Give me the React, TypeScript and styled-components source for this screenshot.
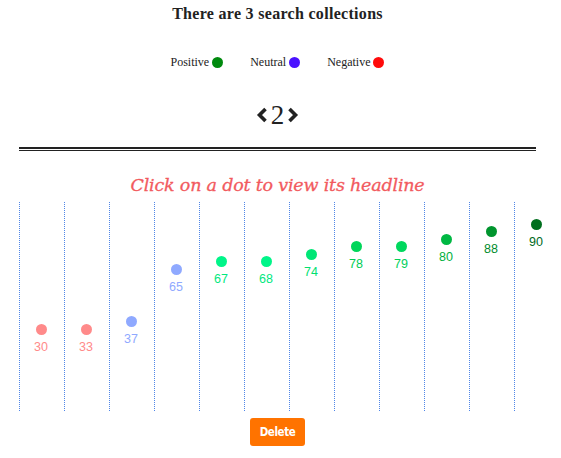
import styled, { createGlobalStyle } from "styled-components";

const GlobalStyle = createGlobalStyle`
  html, body {
    margin: 0;
    padding: 0;
    background: #fff;
  }
  body {
    font-family: "DejaVu Serif", "Liberation Serif", serif;
  }
`;

type Sentiment = {
  score: number;
  offset: number;
  dot: string;
  text: string;
};

// offset = distance from column top to dot top, read from the chart
const scores: Sentiment[] = [
  { score: 30, offset: 122, dot: "#ff8a8a", text: "#ff8a8a" },
  { score: 33, offset: 122, dot: "#ff8a8a", text: "#ff8a8a" },
  { score: 37, offset: 114, dot: "#8fa9ff", text: "#8fa9ff" },
  { score: 65, offset: 62, dot: "#8fa9ff", text: "#8fa9ff" },
  { score: 67, offset: 54, dot: "#00f589", text: "#00e880" },
  { score: 68, offset: 54, dot: "#00f589", text: "#00e880" },
  { score: 74, offset: 47, dot: "#00e676", text: "#00e070" },
  { score: 78, offset: 39, dot: "#00d65a", text: "#00cc55" },
  { score: 79, offset: 39, dot: "#00d85e", text: "#00d05a" },
  { score: 80, offset: 32, dot: "#00b843", text: "#00b040" },
  { score: 88, offset: 24, dot: "#00952e", text: "#008c2c" },
  { score: 90, offset: 17, dot: "#006f1e", text: "#006a1c" },
];

const Page = styled.div`
  width: 555px;
  height: 458px;
  display: flex;
  flex-direction: column;
  align-items: center;
  overflow: hidden;
`;

const Title = styled.h1`
  margin: 5px 0 0;
  font-family: "Liberation Serif", serif;
  font-size: 16px;
  font-weight: bold;
  color: #222;
  letter-spacing: 0.3px;
`;

const Legend = styled.div`
  margin-top: 32px;
  display: flex;
  gap: 27px;
  font-family: "Liberation Serif", serif;
  font-size: 12px;
  color: #222;
`;

const LegendItem = styled.span`
  display: flex;
  align-items: center;
  gap: 3px;
`;

const LegendDot = styled.span<{ $color: string }>`
  width: 11px;
  height: 11px;
  border-radius: 50%;
  background: ${(p) => p.$color};
`;

const Pager = styled.div`
  margin-top: 30px;
  display: flex;
  align-items: center;
  gap: 3px;
  font-family: "Liberation Serif", serif;
  font-size: 27px;
  color: #222;
  line-height: 30px;
`;

const Chevron = styled.svg`
  width: 12px;
  height: 16px;
  cursor: pointer;
`;

const Rule = styled.div`
  margin-top: 17px;
  align-self: flex-start;
  margin-left: 19px;
  width: 517px;
  height: 1px;
  border-top: 2px solid #222;
  border-bottom: 1px solid #222;
`;

const Hint = styled.div`
  margin-top: 24px;
  font-family: "DejaVu Serif", serif;
  font-style: italic;
  font-size: 17.5px;
  color: #f25a5e;
  letter-spacing: -0.2px;
  -webkit-text-stroke: 0.3px #f25a5e;
`;

const Chart = styled.div`
  margin-top: 7px;
  align-self: flex-start;
  margin-left: 19px;
  display: grid;
  grid-template-columns: repeat(12, 45px);
  height: 209px;
`;

const Column = styled.div`
  border-left: 1px dotted #4f86e8;
  padding-right: 2px;
  display: flex;
  flex-direction: column;
  align-items: center;
`;

const Dot = styled.span<{ $color: string; $offset: number }>`
  margin-top: ${(p) => p.$offset}px;
  width: 11px;
  height: 11px;
  border-radius: 50%;
  background: ${(p) => p.$color};
  cursor: pointer;
`;

const Score = styled.span<{ $color: string }>`
  margin-top: 5px;
  font-family: "Liberation Sans", Arial, sans-serif;
  font-size: 12.5px;
  color: ${(p) => p.$color};
`;

const DeleteButton = styled.button`
  margin-top: 7px;
  width: 55px;
  height: 28px;
  border: none;
  border-radius: 3px;
  background: #ff7300;
  color: #fff;
  font-family: "DejaVu Sans", sans-serif;
  font-stretch: condensed;
  font-weight: bold;
  font-size: 11.5px;
  letter-spacing: -0.4px;
  cursor: pointer;
`;

export default function App() {
  return (
    <>
      <GlobalStyle />
      <Page>
        <Title>There are 3 search collections</Title>
        <Legend>
          <LegendItem>
            Positive <LegendDot $color="#008a0e" />
          </LegendItem>
          <LegendItem>
            Neutral <LegendDot $color="#4a12ff" />
          </LegendItem>
          <LegendItem>
            Negative <LegendDot $color="#ff0b0b" />
          </LegendItem>
        </Legend>
        <Pager>
          <Chevron viewBox="0 0 12 16">
            <path d="M9.5 2 L3.5 8 L9.5 14" fill="none" stroke="#222" strokeWidth="3.6" />
          </Chevron>
          2
          <Chevron viewBox="0 0 12 16">
            <path d="M2.5 2 L8.5 8 L2.5 14" fill="none" stroke="#222" strokeWidth="3.6" />
          </Chevron>
        </Pager>
        <Rule />
        <Hint>Click on a dot to view its headline</Hint>
        <Chart>
          {scores.map((s, i) => (
            <Column key={i}>
              <Dot $color={s.dot} $offset={s.offset} />
              <Score $color={s.text}>{s.score}</Score>
            </Column>
          ))}
        </Chart>
        <DeleteButton>Delete</DeleteButton>
      </Page>
    </>
  );
}
